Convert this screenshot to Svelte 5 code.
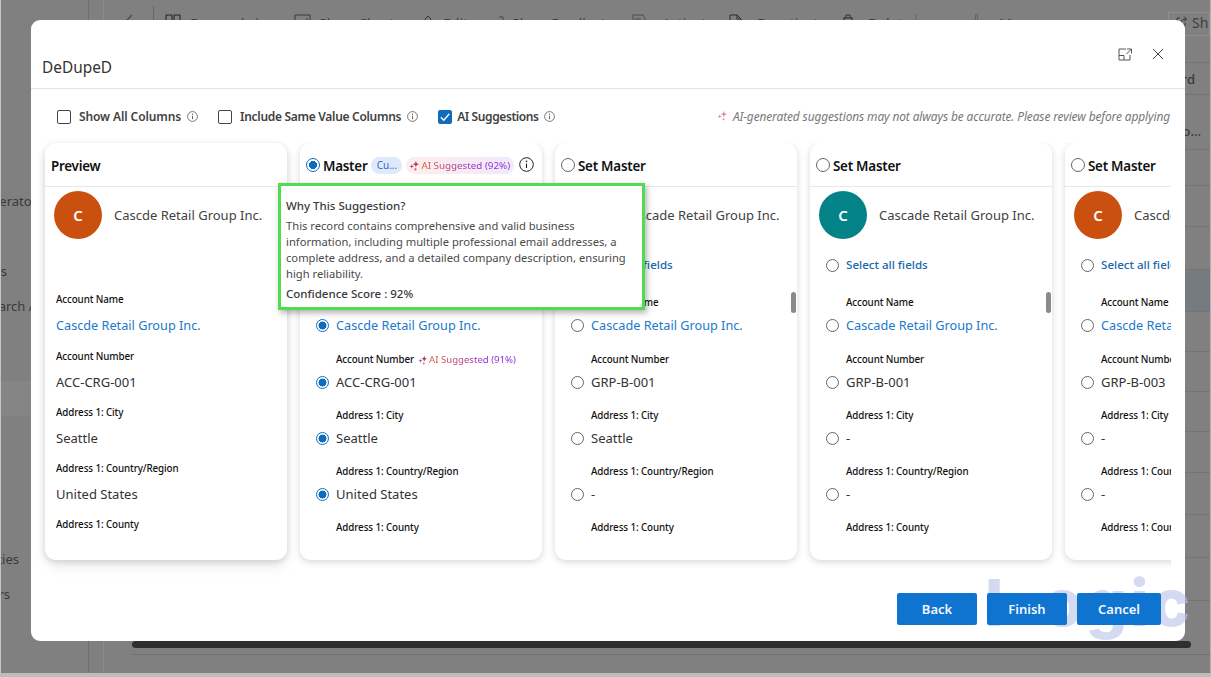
<script>
  const fields = ['Account Name', 'Account Number', 'Address 1: City', 'Address 1: Country/Region', 'Address 1: County'];
  const previewValues = ['Cascde Retail Group Inc.', 'ACC-CRG-001', 'Seattle', 'United States', ''];
  const cards = [
    { master: true, color: '#ca5010', name: 'Cascde Retail Group Inc.', values: ['Cascde Retail Group Inc.', 'ACC-CRG-001', 'Seattle', 'United States', ''] },
    { master: false, color: '#038387', name: 'Cascade Retail Group Inc.', values: ['Cascade Retail Group Inc.', 'GRP-B-001', 'Seattle', '-', ''] },
    { master: false, color: '#038387', name: 'Cascade Retail Group Inc.', values: ['Cascade Retail Group Inc.', 'GRP-B-001', '-', '-', ''] },
    { master: false, color: '#ca5010', name: 'Cascde Retail Group Inc.', values: ['Cascde Retail Group Inc.', 'GRP-B-003', '-', '-', ''] }
  ];
  const sideItems = [
    { text: 'Generator', width: 36, top: 42 },
    { text: 'Accounts', width: 6, top: 50 },
    { text: 'Search A', width: 36, top: 15 },
    { text: '', width: 31, top: 65, sel: true },
    { text: 'Activities', width: 18, top: 133 },
    { text: 'Others', width: 9, top: 15 }
  ];
  const tools = [
    { t: 'Focused view', w: 129, icon: 'M1 1H7V14H1ZM9 1H15V14H9Z', c: '#222', gap: 8 },
    { t: 'Show Chart', w: 124, icon: 'M1 1H16V14H1ZM5 9V12M9 6V12M13 4V12', c: '#3a3a3a', gap: 8 },
    { t: 'Edit', w: 72, icon: 'M3 14 4 9 10 2 13 5 7 12Z', c: '#333', gap: 8 },
    { t: 'Show Duplicates', w: 142, icon: 'M2 8H9M9 3H13V12', c: '#444', gap: 5 },
    { t: 'Activate', w: 97, icon: 'M1 1H11L13 4V14H1ZM3 5H9', c: '#5a4a36', gap: 13 },
    { t: 'Deactivate', w: 112, icon: 'M1 1H8L12 5V14H1ZM8 1V5H12', c: '#2a2a2a', gap: 11 },
    { t: 'Delete', w: 74, icon: 'M2 4H12M5 4V1H9V4M3 4V14H11V4M6 7V12M8 7V12', c: '#2a2a2a', gap: 10 },
    { t: '···', w: 55, icon: 'M1 0V14', c: '#666', gap: 14 },
    { t: 'Merge ···', w: 90, icon: 'M6 0 4 14M7 0 9 14', c: '#3f6f5f', gap: 12 }
  ];
  const rowHeights = [26, 32, 55, 36, 41, 43, 42, 40, 40, 40, 41, 42, 43, 43];
</script>

{#snippet sparkle(size, pale)}
  <svg class="sparkle" class:pale width={size} height={size} viewBox="0 0 12 12" aria-hidden="true">
    <path d="M7.5 1 8.5 3.5 11 4.5 8.5 5.5 7.5 8 6.5 5.5 4 4.5 6.5 3.5Z" fill="#c2334d"/>
    <path d="M3 4.5 3.6 6.4 5.5 7 3.6 7.6 3 9.5 2.4 7.6 .5 7 2.4 6.4Z" fill="#7d4fb8"/>
    <path d="M7 8 7.5 9.5 9 10 7.5 10.5 7 12 6.5 10.5 5 10 6.5 9.5Z" fill="#d0506a"/>
  </svg>
{/snippet}

{#snippet info()}
  <svg class="info" width="11" height="11" viewBox="0 0 11 11" aria-hidden="true">
    <circle cx="5.5" cy="5.5" r="4.9" fill="none" stroke="#555" stroke-width=".8"/>
    <path d="M5.5 4.8V8.2" stroke="#555" stroke-width=".9"/>
    <circle cx="5.5" cy="3.2" r=".6" fill="#555"/>
  </svg>
{/snippet}

<div class="page">
  <div class="bg">
    <aside class="side">
      {#each sideItems as item}
        <div class="side-item" class:sel={item.sel} style="width:{item.width}px;margin-top:{item.top}px"><span>{item.text}</span></div>
      {/each}
    </aside>
    <main class="main">
      <div class="toolbar">
        <span class="chev"><svg width="10" height="14" viewBox="0 0 10 14"><path d="M8 1 2 7" fill="none" stroke="#4a4a4a" stroke-width="1.2"/></svg></span>
        <span class="tsep"></span>
        {#each tools as tool}
          <span class="tool" style="width:{tool.w}px;gap:{tool.gap}px">
            <svg width="17" height="15" viewBox="0 0 17 15" aria-hidden="true"><path d={tool.icon} fill="none" stroke={tool.c} stroke-width="1"/></svg>
            {tool.t}
          </span>
        {/each}
        <span class="share">
          <svg width="13" height="13" viewBox="0 0 13 13" aria-hidden="true"><path d="M5 3H2V11H10V8M6 8C6 5 8 4 11 4M9 1.5 11.5 4 9 6.5" fill="none" stroke="#333" stroke-width="1"/></svg>
          Sh
        </span>
      </div>
      <div class="rows">
        {#each rowHeights as h, i}
          <div class="row" class:hl={i === 6} class:low={i === 2} style="height:{h}px">
            {#if i === 1}<b>rd</b>{/if}
            {#if i === 2}<b>o...</b>{/if}
          </div>
        {/each}
      </div>
      <div class="hscroll"></div>
      <div class="bline"></div>
      <div class="parent">Parent Other Only</div>
    </main>
  </div>
  <div class="bstrip"></div>

  <section class="modal">
    <header class="mhead">
      <h1>DeDupeD</h1>
      <div class="winbtns">
        <svg width="15" height="13" viewBox="0 0 15 13" aria-hidden="true">
          <path d="M8 1H1V12H12V7M1 7.5H6V12M9 1H13.5V5.5M13.5 1 8.5 6" fill="none" stroke="#555" stroke-width="1"/>
        </svg>
        <svg width="12" height="12" viewBox="0 0 12 12" aria-hidden="true">
          <path d="M1 1 11 11M11 1 1 11" stroke="#444" stroke-width="1"/>
        </svg>
      </div>
    </header>

    <div class="opts">
      <label class="opt first"><span class="cb"></span><span>Show All Columns</span>{@render info()}</label>
      <label class="opt second"><span class="cb"></span><span>Include Same Value Columns</span>{@render info()}</label>
      <label class="opt third"><span class="cb on"><svg width="14" height="14" viewBox="0 0 14 14"><path d="M2.8 7.2 5.8 10.2 11.4 3.8" fill="none" stroke="#fff" stroke-width="1.3"/></svg></span><span>AI Suggestions</span>{@render info()}</label>
      <p class="disclaimer">{@render sparkle(11, true)}<em>AI-generated suggestions may not always be accurate. Please review before applying</em></p>
    </div>

    <div class="cardsrow">
      <article class="card preview">
        <div class="chead"><strong>Preview</strong></div>
        <div class="cbody">
          <div class="ident"><span class="avatar av-orange">C</span><span class="iname">Cascde Retail Group Inc.</span></div>
          <div class="pfields">
            {#each fields as f, i}
              <div class="pfield">
                <div class="flabel">{f}</div>
                <div class="fvalue" class:link={i === 0}>{previewValues[i]}</div>
              </div>
            {/each}
          </div>
        </div>
      </article>

      <div class="scroller">
        {#each cards as c}
          <article class="card">
            <div class="chead">
              <span class="radio big" class:on={c.master}></span>
              {#if c.master}
                <strong>Master</strong>
                <span class="chip-cu">Cu...</span>
                <span class="chip-ai">{@render sparkle(11, false)}<span class="grad">AI Suggested (92%)</span></span>
                <svg class="hinfo" width="15" height="15" viewBox="0 0 15 15" aria-hidden="true">
                  <circle cx="7.5" cy="7.5" r="6.8" fill="none" stroke="#222" stroke-width="1"/>
                  <path d="M7.5 6.5V11" stroke="#222" stroke-width="1.1"/>
                  <circle cx="7.5" cy="4.4" r=".8" fill="#222"/>
                </svg>
              {:else}
                <strong>Set Master</strong>
              {/if}
            </div>
            <div class="cbody">
              <div class="ident"><span class="avatar" style="background:{c.color}">C</span><span class="iname">{c.name}</span></div>
              <div class="selall"><span class="radio"></span><span class="sa">Select all fields</span></div>
              {#each fields as f, i}
                <div class="field">
                  <div class="flabel ind">{f}{#if c.master && i === 1}<span class="ai-inline">{@render sparkle(10, false)}<span class="grad">AI Suggested (91%)</span></span>{/if}</div>
                  <div class="fval-row">
                    {#if c.values[i]}<span class="radio" class:on={c.master}></span>{/if}
                    <span class="fvalue" class:link={i === 0}>{c.values[i]}</span>
                  </div>
                </div>
              {/each}
            </div>
            {#if !c.master}<span class="thumb"></span>{/if}
          </article>
        {/each}
      </div>
    </div>

    <footer class="foot">
      <button class="b-back">Back</button>
      <button class="b-back">Finish</button>
      <button class="b-cancel">Cancel</button>
    </footer>
  </section>

  <div class="tip">
    <div class="tip-t">Why This Suggestion?</div>
    <p>This record contains comprehensive and valid business information, including multiple professional email addresses, a complete address, and a detailed company description, ensuring high reliability.</p>
    <div class="tip-c">Confidence Score : 92%</div>
  </div>

  <div class="wm"><span class="wm-l">l</span>ogic</div>
</div>

<style>
  :global(body) { margin: 0; background: #808080; }
  .page {
    position: relative; width: 1211px; height: 677px; overflow: hidden;
    font-family: "Noto Sans", "Open Sans", sans-serif; color: #242424; background: #808080;
  }
  .bg { display: flex; height: 673px; overflow: hidden; border-left: 1px solid #c4c4c4; border-right: 1px solid #b0b0b0; box-sizing: border-box; }
  .bstrip { height: 4px; background: #bdbdbd; }
  .side { width: 87px; flex: none; border-right: 1px solid #6e6e6e; display: flex; flex-direction: column; padding-top: 149px; }
  .side-item { height: 20px; flex: none; display: flex; justify-content: flex-end; overflow: hidden; white-space: nowrap; font-size: 13px; line-height: 20px; color: #3a3a3a; }
  .side-item.sel { height: 35px; background: #858585; }
  .main { flex: 1; min-width: 0; display: flex; flex-direction: column; padding-left: 15px; position: relative; }
  .main::before { content: ''; position: absolute; left: 14px; top: 0; bottom: 0; width: 1px; background: #8c8c8c; }
  .toolbar { height: 37px; flex: none; display: flex; align-items: flex-start; padding-top: 14px; box-sizing: border-box; font-size: 14px; color: #3f3f3f; white-space: nowrap; }
  .chev { width: 49px; padding-left: 20px; box-sizing: border-box; flex: none; }
  .chev svg { display: block; }
  .tsep { width: 1px; height: 24px; background: #666; margin-right: 11px; flex: none; margin-top: -8px; }
  .tool { display: inline-flex; align-items: flex-start; line-height: 20px; flex: none; overflow: hidden; }
  .tool svg { flex: none; }
  .share { margin-left: auto; width: 42px; height: 24px; border: 1px solid #8f8f8f; margin-top: -2px; display: inline-flex; align-items: flex-start; gap: 4px; padding: 2px 0 0 6px; box-sizing: border-box; flex: none; overflow: hidden; line-height: 16px; }
  .rows { height: 604px; flex: none; overflow: hidden; margin-left: -1px; }
  .row { border-bottom: 1px solid #747474; box-sizing: border-box; display: flex; align-items: center; justify-content: flex-end; padding-right: 15px; font-size: 13px; color: #3a3a3a; }
  .row.low { padding: 18px 9px 0 0; }
  .row b { font-weight: 500; }
  .row.hl { background: #767b80; }
  .hscroll { height: 7px; width: 1059px; margin-left: 28px; background: #2f2f2f; border-radius: 4px; flex: none; }
  .bline { height: 1px; background: #707070; margin: 6px 0 0 28px; flex: none; }
  .parent { font-size: 13px; line-height: 18px; color: #222; margin: 16px 0 0 22px; font-weight: 500; flex: none; }

  .modal {
    position: absolute; left: 31px; top: 20px; width: 1154px; height: 621px;
    background: #fff; border-radius: 9px; display: flex; flex-direction: column; overflow: hidden;
  }
  .mhead { height: 69px; flex: none; box-sizing: border-box; border-bottom: 1px solid #e3e3e3; display: flex; justify-content: space-between; padding: 0 21px 0 11px; }
  .mhead h1 { margin: 38px 0 0; font-size: 15.4px; line-height: 20px; font-weight: 400; color: #333; }
  .winbtns { display: flex; gap: 19px; align-items: center; height: 14px; margin-top: 27px; }

  .opts { height: 54px; flex: none; display: flex; align-items: center; font-size: 12px; color: #424242; padding: 1px 15px 0 26px; box-sizing: border-box; }
  .opt { display: flex; align-items: center; font-weight: 600; letter-spacing: -.2px; }
  .opt .info { margin-left: 6px; }
  .opt.first { letter-spacing: -.1px; }
  .cb { width: 14px; height: 14px; box-sizing: border-box; border: 1px solid #444; border-radius: 2px; display: block; flex: none; margin-right: 8px; }
  .cb.on { background: #0f6cbd; border-color: #0f6cbd; margin-right: 5px; }
  .cb.on svg { display: block; margin: -1px; }
  .opt.second { margin-left: 20px; letter-spacing: -.3px; }
  .opt.third { margin-left: 20px; letter-spacing: -.4px; }
  .opt.third .info { margin-left: 5px; }
  .disclaimer { margin: 0 0 2px auto; display: flex; align-items: center; gap: 5px; font-size: 11.9px; color: #777; letter-spacing: -.1px; }
  .disclaimer em { font-style: italic; }
  .sparkle { flex: none; }
  .sparkle.pale { opacity: .55; }

  .cardsrow { height: 427px; flex: none; display: flex; padding-left: 14px; }
  .card {
    position: relative; width: 242px; height: 417px; flex: none; box-sizing: border-box; background: #fff;
    border-radius: 11px; box-shadow: 0 2px 7px rgba(0,0,0,.16); overflow: hidden;
  }
  .card.preview { box-shadow: 0 2px 7px rgba(0,0,0,.16), 0 8px 14px rgba(0,0,0,.06); }
  .scroller { width: 878px; height: 427px; margin-left: 6px; padding-left: 7px; box-sizing: border-box; display: flex; gap: 13px; overflow: hidden; position: relative; }
  .chead { height: 44px; box-sizing: border-box; border-bottom: 1px solid #e8e8e8; display: flex; align-items: center; padding: 2px 6px 0; font-size: 13.4px; white-space: nowrap; color: #111; }
  .chead strong { font-weight: 600; letter-spacing: -.25px; }
  .radio { width: 13px; height: 13px; box-sizing: border-box; border: 1px solid #666; border-radius: 50%; display: block; flex: none; background: #fff; }
  .radio.big { width: 14px; height: 14px; margin-right: 3px; margin-top: -2px; }
  .radio.on { border: 1.5px solid #0f6cbd; background: radial-gradient(circle, #0f6cbd 0 3.8px, #fff 4.2px); }
  .chip-cu { margin-left: 4px; width: 31px; height: 17px; line-height: 16px; text-align: center; border-radius: 9px; background: #dfe9fb; color: #2f6dbd; font-size: 10px; flex: none; }
  .chip-ai { margin-left: 4px; height: 17px; width: 108px; border-radius: 9px; background: linear-gradient(90deg, #fdeeed, #f1e9fb); display: inline-flex; align-items: center; gap: 1px; padding-left: 3px; box-sizing: border-box; font-size: 9.8px; flex: none; }
  .grad { background: linear-gradient(90deg, #e0552f, #8a2bd8 70%); -webkit-background-clip: text; background-clip: text; color: transparent; }
  .hinfo { margin-left: 5px; margin-top: -3px; flex: none; }
  .cbody { padding-top: 4px; }
  .ident { display: flex; align-items: center; gap: 12px; padding-left: 9px; height: 48px; }
  .avatar { width: 48px; height: 48px; border-radius: 50%; display: flex; align-items: center; justify-content: center; color: #fff; font-weight: 600; font-size: 15px; flex: none; }
  .av-orange { background: #ca5010; }
  .iname { font-size: 13px; color: #424242; white-space: nowrap; }
  .selall { display: flex; align-items: center; height: 20px; margin: 16px 0 20px; padding-left: 16px; gap: 7px; }
  .sa { font-size: 11.6px; font-weight: 500; color: #1868ac; white-space: nowrap; margin-top: -2px; }
  .pfields { margin-top: 53px; padding-left: 11px; }
  .pfield { height: 56px; }
  .pfield:first-child { height: 57px; }
  .pfield .flabel { margin-bottom: 5px; }
  .flabel { font-size: 9.8px; letter-spacing: -.1px; line-height: 16px; height: 16px; font-weight: 500; color: #111; white-space: nowrap; display: flex; align-items: center; }
  .fvalue { font-size: 13px; line-height: 24px; height: 24px; display: block; color: #333; white-space: nowrap; }
  .fvalue.link { color: #1c79c9; font-size: 12.7px; }
  .field { height: 56px; padding-left: 16px; }
  .selall + .field { height: 57px; }
  .flabel.ind { padding-left: 20px; margin-bottom: 2px; }
  .fval-row { display: flex; align-items: center; gap: 7px; height: 24px; }
  .ai-inline { margin-left: 4px; display: inline-flex; align-items: center; gap: 1px; font-size: 9.6px; letter-spacing: 0; font-weight: 400; }
  .thumb { position: absolute; right: 1px; top: 149px; width: 5px; height: 21px; border-radius: 3px; background: #8a8a8a; }

  .foot { display: flex; justify-content: flex-end; gap: 10px; padding: 23px 24px 0 0; position: relative; z-index: 2; }
  .foot button { height: 32px; border: 0; border-radius: 2px; background: #0f74d0; color: #f1f6ff; font: 600 13px "Noto Sans", sans-serif; padding: 0; }
  .b-back { width: 80px; }
  .b-cancel { width: 84px; }

  .tip {
    position: absolute; left: 278px; top: 183px; width: 367px; height: 127px; box-sizing: border-box; z-index: 3;
    background: #fff; border: 3px solid #4fdd4f; box-shadow: 2px 3px 6px rgba(0,0,0,.3);
    padding: 12px 5px 0; font-size: 11.2px; line-height: 16px; color: #4a4a4a;
  }
  .tip p { margin: 4px 0; }
  .tip-t, .tip-c { font-weight: 500; color: #3a3a3a; font-size: 11.5px; }
  .tip-c { margin-top: 4px; }

  .wm {
    position: absolute; left: 985px; top: 553px; font: 800 65px/100px "Inter", sans-serif; letter-spacing: 3px; white-space: nowrap;
    color: #b8c3e8; opacity: .6; pointer-events: none; z-index: 1;
  }
  .wm-l { margin-right: 36px; }
</style>
